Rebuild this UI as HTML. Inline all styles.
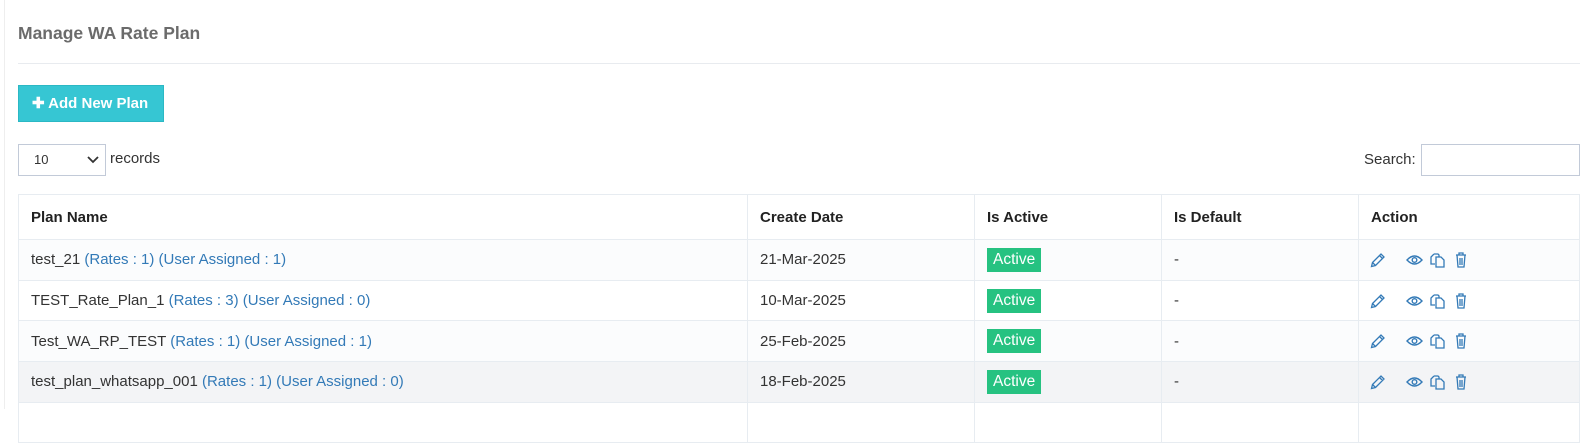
<!DOCTYPE html>
<html><head><meta charset="utf-8"><style>
*{box-sizing:border-box;margin:0;padding:0}
body{width:1587px;height:409px;overflow:hidden;background:#fff;font-family:"Liberation Sans",Arial,sans-serif;color:#333;font-size:15px;position:relative}
.abs{position:absolute}
.title{left:18px;top:23px;font-size:17.5px;font-weight:bold;color:#6b6b6b}
.hr{left:18px;top:63px;width:1562px;height:1px;background:#e8ebef}
.btn{left:18px;top:85px;width:146px;height:37px;background:#36c6d3;border:1px solid #2bb8c4;color:#fff;font-weight:bold;font-size:15px;line-height:35px;padding-left:13px}
.sel{left:18px;top:144px;width:88px;height:32px;border:1px solid #c2cad8;font-size:13px;line-height:30px;padding-left:15px}
.search{left:1421px;top:144px;width:159px;height:32px;border:1px solid #c2cad8}
table{position:absolute;left:18px;top:194px;width:1562px;border-collapse:collapse}
td,th{border:1px solid #e7ecf1;padding:0 12px;text-align:left;height:40.7px;font-size:15px}
th{height:45px;font-weight:bold;color:#222}
tr.o td{background:#fbfcfd}
tr.h td{background:#f3f4f6}
a{color:#337ab7;text-decoration:none}
.b{display:inline-block;background:#26c281;color:#fff;font-size:15.5px;padding:0 6px;line-height:24px;height:24px}
.ic{display:flex;gap:0;align-items:center}
.ic svg{display:block}
</style></head><body>
<div class="abs" style="left:4px;top:0;width:1px;height:409px;background:#eee"></div>
<div class="abs title">Manage WA Rate Plan</div>
<div class="abs hr"></div>
<div class="abs btn">✚ Add New Plan</div>
<div class="abs sel">10<svg class="abs" style="left:68px;top:11px" width="12" height="8" viewBox="0 0 12 8"><path d="M1 1l5 5 5-5" fill="none" stroke="#333" stroke-width="1.8"/></svg></div>
<div class="abs" style="left:110px;top:150px">records</div>
<div class="abs" style="left:1364px;top:151px">Search:</div>
<div class="abs search"></div>
<table>
<tr><th style="width:729px">Plan Name</th><th style="width:227px">Create Date</th><th style="width:187px">Is Active</th><th style="width:197px">Is Default</th><th>Action</th></tr>
<tr class="o"><td>test_21 <a>(Rates : 1) (User Assigned : 1)</a></td><td>21-Mar-2025</td><td><span class="b">Active</span></td><td>-</td><td>ICONS</td></tr>
<tr><td>TEST_Rate_Plan_1 <a>(Rates : 3) (User Assigned : 0)</a></td><td>10-Mar-2025</td><td><span class="b">Active</span></td><td>-</td><td>ICONS</td></tr>
<tr class="o"><td>Test_WA_RP_TEST <a>(Rates : 1) (User Assigned : 1)</a></td><td>25-Feb-2025</td><td><span class="b">Active</span></td><td>-</td><td>ICONS</td></tr>
<tr class="h"><td>test_plan_whatsapp_001 <a>(Rates : 1) (User Assigned : 0)</a></td><td>18-Feb-2025</td><td><span class="b">Active</span></td><td>-</td><td>ICONS</td></tr>
<tr><td></td><td></td><td></td><td></td><td></td></tr>
</table>
<script>
var s='<div class="ic" style="margin-left:-2px"><svg width="18" height="18" viewBox="0 0 18 18"><path d="M2.5 15.5l1-4 8.5-8.5 3 3-8.5 8.5z M10.5 4.5l3 3 M3.5 11.5l3 3" fill="none" stroke="#337ab7" stroke-width="1.3"/></svg><svg width="17" height="12" viewBox="0 0 17 12" style="margin-left:19px"><path d="M1 6Q8.5-2 16 6Q8.5 14 1 6z" fill="none" stroke="#337ab7" stroke-width="1.4"/><circle cx="8.5" cy="6" r="2.3" fill="none" stroke="#337ab7" stroke-width="1.4"/></svg><svg width="16" height="16" viewBox="0 0 16 16" style="margin-left:7px"><path d="M4 2h4l1 1v2 M4 2L1 5v7h4 M6 5h5l3 3v7H6z" fill="none" stroke="#337ab7" stroke-width="1.3"/></svg><svg width="12" height="16" viewBox="0 0 12 16" style="margin-left:9px"><path d="M1 3h10 M4 3V1h4v2 M2 3l1 12h6l1-12 M5 6v7 M7 6v7" fill="none" stroke="#337ab7" stroke-width="1.3"/></svg></div>';
document.querySelectorAll('td').forEach(function(t){if(t.textContent=='ICONS')t.innerHTML=s;});
</script>
</body></html>
